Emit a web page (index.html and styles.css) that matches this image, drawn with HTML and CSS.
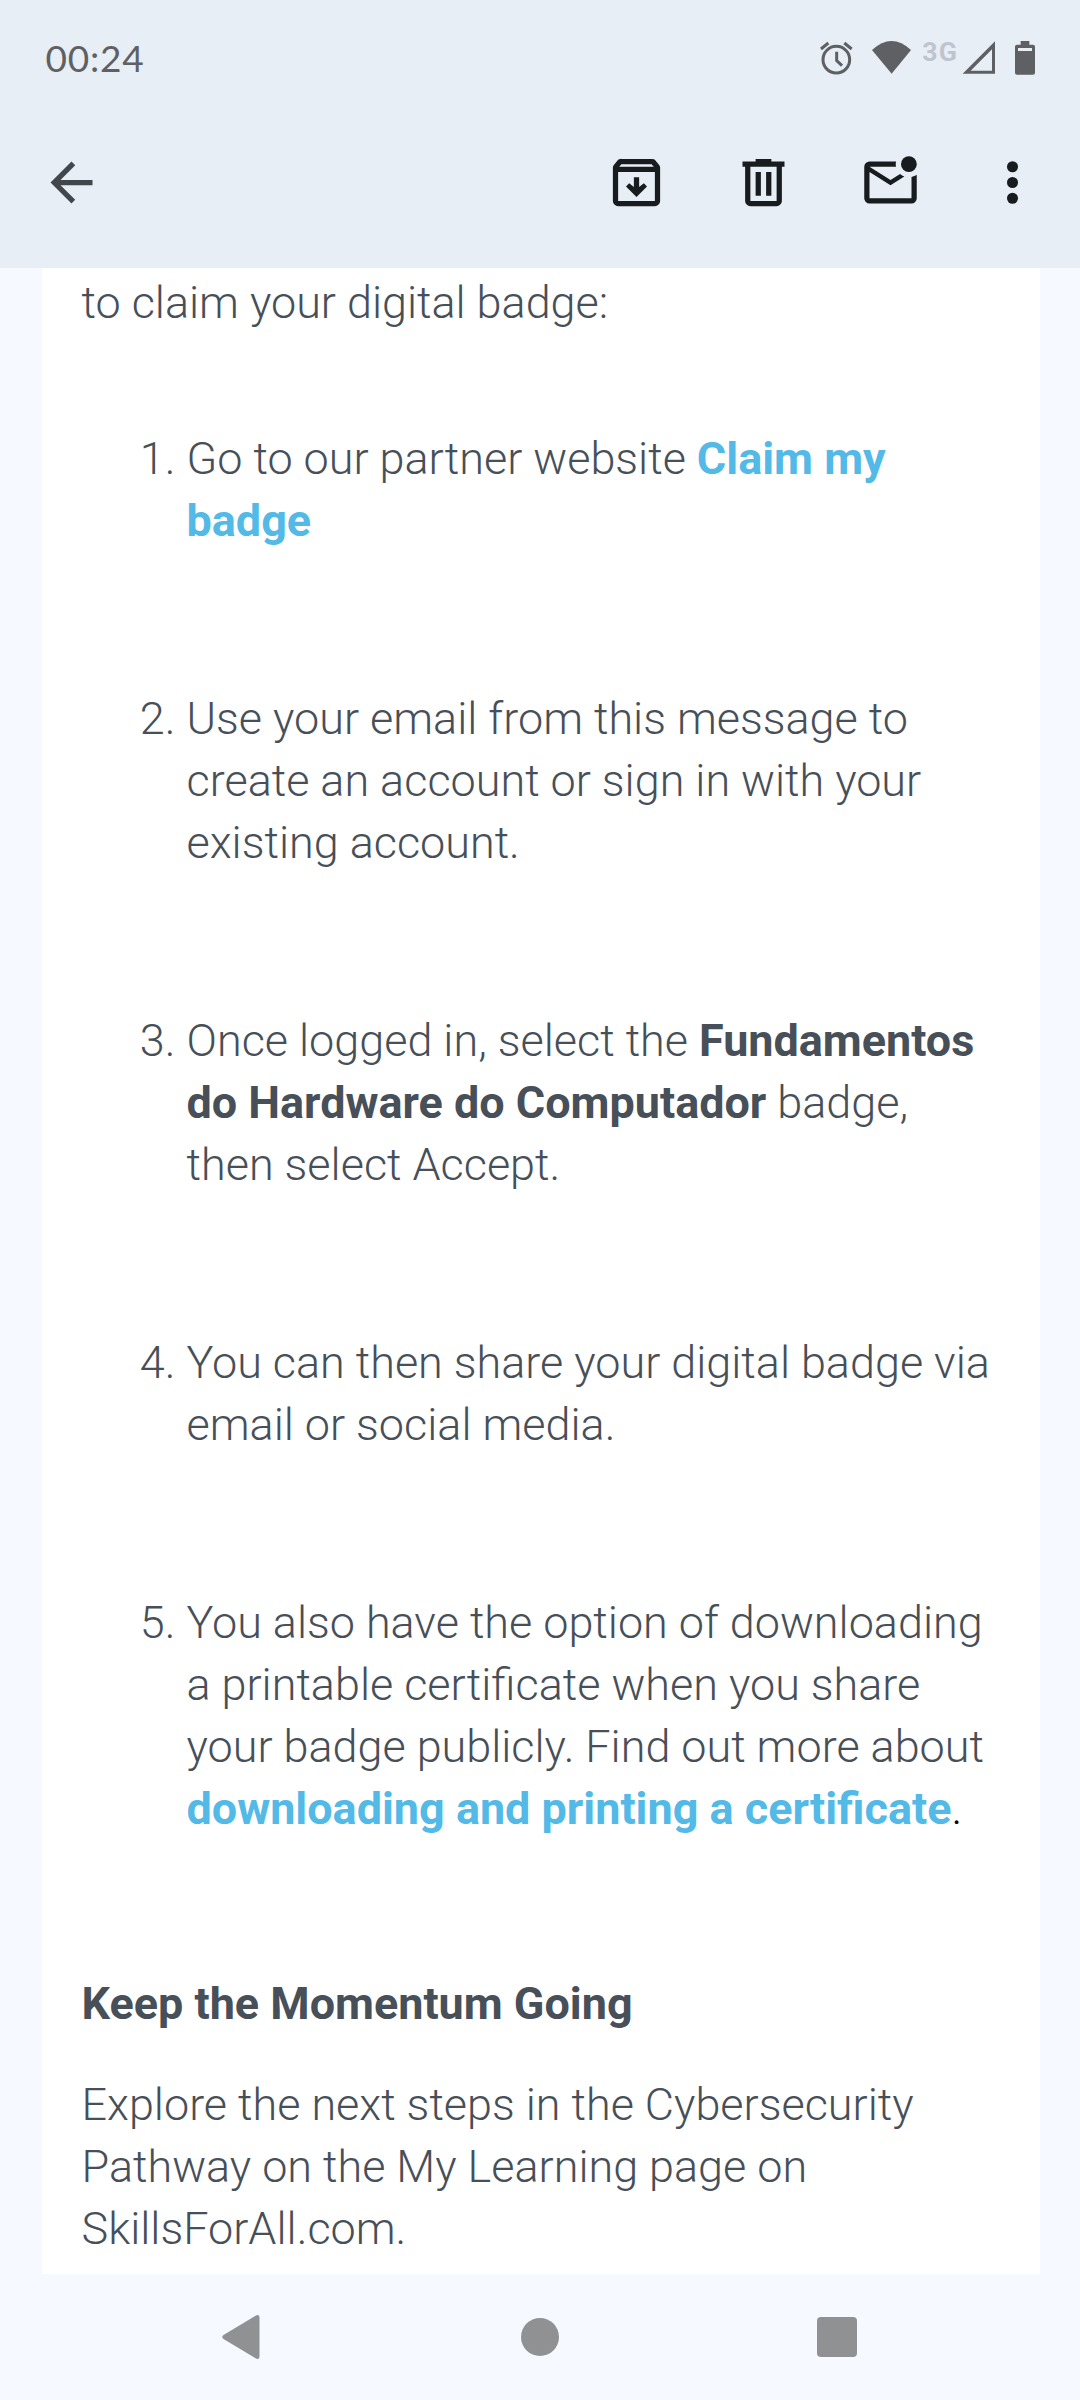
FILE: index.html
```html
<!DOCTYPE html>
<html lang="en">
<head>
<meta charset="utf-8">
<title>Claim your digital badge</title>
<link rel="stylesheet" href="styles.css">
</head>
<body>
<header class="top">
  <div class="status">
    <span class="clock">00:24</span>
    <svg class="status-icons" viewBox="0 0 900 240" width="300" height="80">
      <g class="outline"><circle cx="169" cy="119" r="40"/><path d="M170 95v27l16 15M123 87l22-18M193 69l22 18"/></g>
      <path d="M276 90Q335 36 393 90L335 161z"/>
      <text x="427" y="123" textLength="104" class="network">3G</text>
      <path fill-rule="evenodd" d="M548 161h97V64zM572 152h64V88z"/>
      <path fill-rule="evenodd" d="M722 63h26v11h11q6 0 6 6v78q0 6-6 6h-48q-6 0-6-6V80q0-6 6-6h11zM714 84v9h42v-9z"/>
    </svg>
  </div>
  <nav class="toolbar">
    <svg class="back" viewBox="0 0 24 24"><path d="M20 11H7.83l5.59-5.59L12 4l-8 8 8 8 1.41-1.41L7.83 13H20z"/></svg>
    <svg viewBox="0 0 24 24"><path d="M12 17.5l4-4-1.2-1.2-1.8 1.4V10h-2v3.7l-1.8-1.4L8 13.5zM5 8v11h14V8zm0 13q-.825 0-1.413-.587T3 19V6.525q0-.35.113-.675t.337-.6L4.7 3.725q.275-.35.687-.538T6.25 3h11.5q.45 0 .863.188t.687.537l1.25 1.525q.225.275.338.6t.112.675V19q0 .825-.587 1.413T19 21zM5.4 6h13.2l-.85-1H6.25z"/></svg>
    <svg viewBox="0 0 24 24"><path d="M7 21q-.825 0-1.413-.587T5 19V6H4V4h5V3h6v1h5v2h-1v13q0 .825-.587 1.413T17 21zM17 6H7v13h10zM9 17h2V8H9zm4 0h2V8h-2z"/></svg>
    <svg viewBox="0 0 24 24"><path d="M4 20q-.825 0-1.413-.587T2 18V6q0-.825.588-1.413T4 4h10.1q-.1.5-.1 1t.1 1H4l8 5 3.65-2.275q.35.325.763.563t.862.412L12 13 4 8v10h16V9.9q.575-.125 1.075-.35T22 9v9q0 .825-.587 1.413T20 20z"/><circle cx="19" cy="5" r="3"/></svg>
    <svg class="more" viewBox="0 0 24 24"><circle cx="12" cy="6" r="2.1"/><circle cx="12" cy="12" r="2.1"/><circle cx="12" cy="18" r="2.1"/></svg>
  </nav>
</header>
<main class="message">
  <p>to claim your digital badge:</p>
  <ol class="steps">
    <li>Go to our partner website <a>Claim my<br>badge</a></li>
    <li>Use your email from this message to<br>create an account or sign in with your<br>existing account.</li>
    <li>Once logged in, select the <b>Fundamentos<br>do Hardware do Computador</b> badge,<br>then select Accept.</li>
    <li>You can then share your digital badge via<br>email or social media.</li>
    <li>You also have the option of downloading<br>a printable certificate when you share<br>your badge publicly. Find out more about<br><a>downloading and printing a certificate</a><span class="stop">.</span></li>
  </ol>
  <h2>Keep the Momentum Going</h2>
  <p class="next">Explore the next steps in the Cybersecurity<br>Pathway on the My Learning page on<br>SkillsForAll.com.</p>
</main>
<footer class="navigation">
  <svg width="38" height="44" viewBox="0 0 38 44"><path d="M1.5 20L34 .5Q37.500-1 37.500 3v38q0 4-3.500 2.500L1.500 24Q-1 22 1.500 20z"/></svg>
  <svg class="home" width="38" height="38" viewBox="0 0 38 38"><circle cx="19" cy="19" r="19"/></svg>
  <svg width="40" height="40" viewBox="0 0 40 40"><rect width="40" height="40" rx="4"/></svg>
</footer>
</body>
</html>
```
FILE: styles.css
```css
* { box-sizing: border-box; }
body { margin: 0; height: 2400px; background: #f6f9ff; font: 300 44.95px/62px Roboto, sans-serif; color: #474f58; display: flex; flex-direction: column; overflow: hidden; }
.top { height: 268px; background: #e7eef6; flex: none; }
.status { height: 116px; padding: 20px 0 0 45.5px; display: flex; justify-content: space-between; align-items: flex-start; }
.status-icons { fill: #5e6063; }
.outline { fill: none; stroke: #5e6063; stroke-width: 9; }
.clock { font: 400 37px/54px Lato, sans-serif; letter-spacing: 0.8px; color: #5f6063; padding-top: 11px; }
.network { font: 700 80px Roboto, sans-serif; fill: #bfc5ce; }
.toolbar { display: flex; align-items: flex-start; padding: 35px 36px 0 40px; gap: 64px; }
.toolbar svg { width: 63px; height: 63px; fill: #181c1f; }
.toolbar .back { margin-right: auto; fill: #42474e; }
.toolbar .more { margin-left: -5px; }
.message { width: 998px; height: 2006px; margin-left: 42px; padding: 4px 0 0 39.5px; background: #fff; flex: none; white-space: nowrap; }
p, h2, ol { margin: 0; }
a, b, h2 { font-weight: 700; }
a { color: #53b9e7; }
h2 { font-size: inherit; line-height: 62px; margin-top: 133px; }
.steps { padding: 0 0 0 105px; margin-top: 94px; display: grid; gap: 136px; }
.next { margin-top: 39px; }
.stop { color: #000; }
.navigation { height: 126px; flex: none; display: flex; align-items: center; justify-content: space-between; padding: 0 223px 0 222px; fill: #909193; }
.home { margin-left: 3px; }
```
